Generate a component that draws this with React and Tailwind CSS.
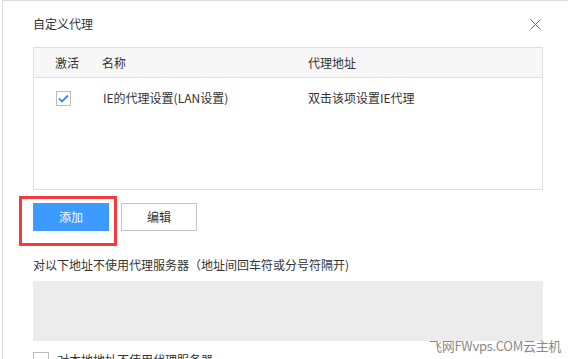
const font = { fontFamily: '"Noto Sans CJK SC", "Liberation Sans", sans-serif' };

const CheckBox = ({ checked }) => (
  <div className="w-[15px] h-[15px] border border-[#bcbcbc] bg-white flex items-center justify-center">
    {checked && (
      <svg width="11" height="9" viewBox="0 0 11 9">
        <path d="M1 4.5 L4 7.5 L10 1.5" fill="none" stroke="#2f8ef5" strokeWidth="1.8" />
      </svg>
    )}
  </div>
);

const App = () => {
  return (
    <div className="w-[568px] h-[359px] bg-white overflow-hidden relative text-[12px] text-[#333]" style={font}>
      <div className="ml-[2px] h-full border-l border-t border-[#dcdcdc] flex flex-col">
        <div className="h-[46px] flex items-center justify-between pl-[30px] pr-[27px] shrink-0">
          <span className="text-[12px] text-[#333]">自定义代理</span>
          <svg width="11" height="11" viewBox="0 0 11 11">
            <path d="M0.5 0.5 L10.5 10.5 M10.5 0.5 L0.5 10.5" stroke="#666" strokeWidth="1" />
          </svg>
        </div>

        <div className="ml-[30px] w-[510px] h-[143px] border border-[#e0e0e0] shrink-0">
          <div className="h-[30px] bg-[#f7f7f7] border-b border-[#e0e0e0] flex items-center">
            <span className="ml-[21px] w-[47px]">激活</span>
            <span className="w-[206px]">名称</span>
            <span>代理地址</span>
          </div>
          <div className="h-[40px] flex items-center">
            <div className="ml-[22px] w-[47px]">
              <CheckBox checked />
            </div>
            <span className="w-[205px]">IE的代理设置(LAN设置)</span>
            <span>双击该项设置IE代理</span>
          </div>
        </div>

        <div className="ml-[30px] mt-[13px] flex gap-[12px] shrink-0">
          <button className="w-[76px] h-[28px] bg-[#3d9bff] text-white text-[12px]">添加</button>
          <button className="w-[76px] h-[28px] border border-[#c4c4c4] bg-white text-[#333] text-[12px]">编辑</button>
        </div>

        <div className="ml-[30px] mt-[25px] leading-[17px]">对以下地址不使用代理服务器（地址间回车符或分号符隔开)</div>

        <div className="ml-[30px] mt-[8px] w-[510px] h-[60px] bg-[#ececec] shrink-0"></div>

        <div className="ml-[30px] mt-[10px] flex items-center gap-[8px]">
          <div className="w-[16px] h-[16px] border border-[#bcbcbc]"></div>
          <span>对本地地址不使用代理服务器</span>
        </div>
      </div>

      <div className="absolute left-[19px] top-[196px] w-[98px] h-[50px] border-[3px] border-[#f03c3c]"></div>

      <div className="absolute left-[429px] top-[338px] text-[13px] leading-[16px] tracking-[-0.3px] text-[#8a8a8a] whitespace-nowrap">
        飞网FWvps.COM云主机
      </div>
    </div>
  );
};

export default App;
